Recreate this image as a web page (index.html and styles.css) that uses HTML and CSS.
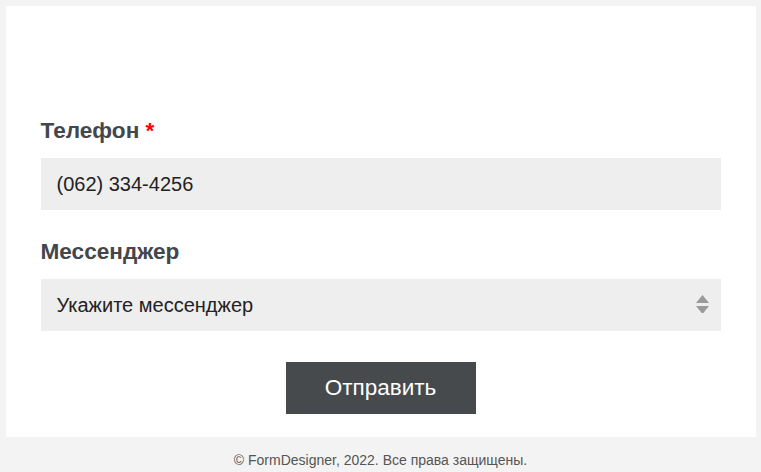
FILE: index.html
```html
<!DOCTYPE html>
<html lang="ru">
<head>
<meta charset="utf-8">
<title>Форма</title>
<link rel="stylesheet" href="styles.css">
</head>
<body>
<main class="card">
  <form class="form">
    <div class="field">
      <label class="label" for="phone">Телефон <span class="req">*</span></label>
      <input class="input" id="phone" type="text" value="(062) 334-4256">
    </div>
    <div class="field">
      <label class="label" for="msg">Мессенджер</label>
      <div class="select-wrap">
        <div class="select" id="msg">Укажите мессенджер</div>
        <svg class="arrows" width="13" height="18" viewBox="0 0 13 18" aria-hidden="true">
          <polygon points="6.5,0 13,8 0,8" fill="#9a9a9a"/>
          <polygon points="0,11 13,11 6.5,19" fill="#9a9a9a"/>
        </svg>
      </div>
    </div>
    <div class="actions">
      <button class="btn" type="button">Отправить</button>
    </div>
  </form>
</main>
<footer class="footer">© FormDesigner, 2022. Все права защищены.</footer>
</body>
</html>
```
FILE: styles.css
```css
html, body {
  margin: 0;
  padding: 0;
}
body {
  background: #f3f3f3;
  font-family: "Liberation Sans", Arial, sans-serif;
  color: #444;
}
.card {
  width: 750px;
  margin: 6px auto 0;
  background: #fff;
  box-sizing: border-box;
  padding: 110px 35px 23px;
  height: 431px;
}
.form {
  display: flex;
  flex-direction: column;
}
.field {
  display: flex;
  flex-direction: column;
  margin-bottom: 27px;
}
.field + .field {
  margin-bottom: 31px;
}
.label {
  font-size: 22.6px;
  line-height: 26px;
  font-weight: bold;
  color: #43464a;
  padding-top: 2px;
  margin-bottom: 14px;
}
.req {
  color: #f00;
}
.input, .select {
  box-sizing: border-box;
  width: 100%;
  height: 52px;
  border: 0;
  background: #eeeeee;
  padding: 0 16px;
  font-family: "Liberation Sans", Arial, sans-serif;
  font-size: 20px;
  color: #222;
  outline: none;
  margin: 0;
}
.select {
  display: flex;
  align-items: center;
}
.select-wrap {
  position: relative;
}
.arrows {
  position: absolute;
  right: 12px;
  top: 16px;
}
.actions {
  display: flex;
  justify-content: center;
}
.btn {
  width: 190px;
  height: 52px;
  border: 0;
  background: #474a4d;
  color: #fff;
  font-family: "Liberation Sans", Arial, sans-serif;
  font-size: 22.5px;
  padding: 0;
}
.footer {
  text-align: center;
  font-size: 14px;
  line-height: 16px;
  color: #555;
  padding-top: 15px;
}
```
